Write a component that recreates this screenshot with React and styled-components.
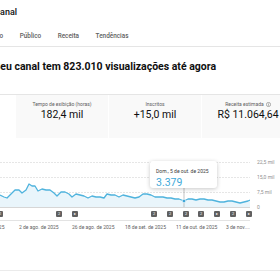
import React from "react";
import styled, { createGlobalStyle } from "styled-components";

const Global = createGlobalStyle`
  body {
    margin: 0;
    background: #fff;
  }
`;

const Page = styled.div`
  width: 280px;
  height: 280px;
  overflow: hidden;
  background: #fff;
  font-family: Roboto, "Liberation Sans", sans-serif;
  color: #0f0f0f;
`;

const Title = styled.h1`
  margin: 7px 0 0 -4.6px;
  font-size: 9px;
  line-height: 10px;
  font-weight: 500;
  white-space: nowrap;
`;

const Tabs = styled.nav`
  display: flex;
  align-items: center;
  gap: 16.5px;
  height: 20px;
  margin-top: 9px;
  margin-left: -24.5px;
  border-bottom: 1px solid #e5e5e5;
`;

const Tab = styled.span`
  font-size: 6.4px;
  font-weight: 500;
  color: #606060;
  white-space: nowrap;
`;

const Heading = styled.h2`
  margin: 14px 0 0 -6.2px;
  font-size: 10.5px;
  line-height: 12px;
  font-weight: 700;
  white-space: nowrap;
`;

const Cards = styled.div`
  display: flex;
  gap: 1px;
  width: 371px;
  margin-top: 21px;
  margin-left: -77px;
  border-top: 1px solid #e5e5e5;
`;

const Card = styled.div`
  width: 92px;
  height: 43px;
  flex-shrink: 0;
  display: flex;
  flex-direction: column;
  align-items: center;
  padding-top: 6px;
  box-sizing: border-box;
  background: ${(p) => (p.$active ? "#fff" : "#f9f9f9")};
`;

const CardLabel = styled.div`
  display: flex;
  align-items: center;
  gap: 2px;
  font-size: 5px;
  line-height: 6px;
  color: #606060;
  white-space: nowrap;
`;

const CardValue = styled.div`
  margin-top: 1.7px;
  font-size: 10.5px;
  line-height: 12px;
  white-space: nowrap;
`;

const ChartRow = styled.div`
  position: relative;
  display: flex;
  height: 70px;
`;

const Plot = styled.svg`
  display: block;
  flex-shrink: 0;
`;

const YAxis = styled.div`
  display: flex;
  flex-direction: column;
  gap: 7.3px;
  padding: 19.5px 0 0 7px;
`;

const YLabel = styled.span`
  font-size: 5px;
  line-height: 8px;
  color: #909090;
  white-space: nowrap;
`;

const Tooltip = styled.div`
  position: absolute;
  left: 150px;
  top: 23px;
  width: 67px;
  height: 27px;
  box-sizing: border-box;
  padding: 6.5px 0 0 6px;
  background: #fff;
  border-radius: 3px;
  box-shadow: 0 1px 4px rgba(0, 0, 0, 0.22);
`;

const TipDate = styled.div`
  font-size: 5px;
  line-height: 6px;
  color: #3a3a3a;
  white-space: nowrap;
`;

const TipValue = styled.div`
  margin-top: 3.3px;
  font-size: 10.5px;
  line-height: 12px;
  color: #41a9d9;
`;

const MarkerTrack = styled.div`
  position: relative;
  width: 250px;
  height: 12px;
  border-bottom: 1px solid #e3e3e3;
`;

const Marker = styled.span`
  position: absolute;
  top: 3px;
  width: 6px;
  height: 6px;
  border-radius: 1px;
  background: #606060;
  color: #fff;
  font-size: 4px;
  line-height: 6px;
  text-align: center;
`;

const XAxis = styled.div`
  position: relative;
  width: 250px;
  height: 14px;
`;

const XLabel = styled.span`
  position: absolute;
  top: 3px;
  font-size: 5px;
  line-height: 6px;
  color: #606060;
  white-space: nowrap;
`;

const Divider = styled.div`
  margin-top: 35px;
  height: 1px;
  background: #ebebeb;
`;

const cards = [
  { label: "Visualizações", value: "823,0 mil", active: true },
  { label: "Tempo de exibição (horas)", value: "182,4 mil" },
  { label: "Inscritos", value: "+15,0 mil" },
  { label: "Receita estimada", value: "R$ 11.064,64", info: true },
];

const points = [
  [0, 195], [4, 197], [7, 198], [11, 194], [15, 190], [19, 190], [22, 193],
  [26, 190], [29, 184], [32, 186], [35, 186], [38, 191], [42, 189], [46, 190],
  [50, 190], [54, 193], [57, 196], [61, 192], [65, 192], [69, 194], [72, 197],
  [76, 194], [80, 195], [84, 196], [88, 198], [92, 196], [96, 197], [100, 197],
  [104, 198], [107, 194], [111, 195], [115, 195], [119, 197], [123, 195],
  [127, 196], [131, 197], [135, 198], [139, 197], [143, 194], [147, 194],
  [151, 195], [155, 197], [159, 197], [163, 197], [167, 198], [171, 198],
  [175, 199], [179, 199], [184, 201], [188, 199], [192, 199], [196, 200],
  [200, 199], [204, 199], [208, 200], [212, 200], [216, 201], [220, 202],
  [224, 202], [228, 201], [232, 201], [236, 202], [240, 203], [244, 202],
  [248, 201], [250, 200],
];

const markers = [
  { x: -3, g: "2" }, { x: 56, g: "2" }, { x: 72, g: "▸" }, { x: 151, g: "2" },
  { x: 167, g: "2" }, { x: 183, g: "2" }, { x: 198, g: "2" }, { x: 214, g: "▸" },
  { x: 230, g: "2" }, { x: 246, g: "▸" },
];

const xLabels = [
  { x: -32, t: "9 de jul. de 2025" },
  { x: 19, t: "2 de ago. de 2025" },
  { x: 72, t: "26 de ago. de 2025" },
  { x: 125, t: "18 de set. de 2025" },
  { x: 176, t: "11 de out. de 2025" },
  { x: 226, t: "3 de nov...." },
];

const InfoIcon = () => (
  <svg width="5" height="5" viewBox="0 0 10 10">
    <circle cx="5" cy="5" r="4.2" fill="none" stroke="#606060" strokeWidth="1" />
    <rect x="4.5" y="4.2" width="1" height="3.2" fill="#606060" />
    <rect x="4.5" y="2.5" width="1" height="1" fill="#606060" />
  </svg>
);

const Chart = () => {
  const top = 138;
  const line = points.map(([x, y]) => `${x},${y - top}`).join(" ");
  const area = `0,69 ${line} 250,69`;
  return (
    <ChartRow>
      <Plot width="250" height="70" viewBox="0 0 250 70">
        {[24, 39, 54].map((y) => (
          <line key={y} x1="0" x2="250" y1={y + 0.5} y2={y + 0.5} stroke="#e6e6e6" strokeDasharray="2 1" />
        ))}
        <polygon points={area} fill="#e9f5fb" />
        <polyline points={line} fill="none" stroke="#4fb3dd" strokeWidth="1.3" strokeLinejoin="round" />
        <line x1="0" x2="250" y1="69.5" y2="69.5" stroke="#d6d6d6" />
        <line x1="184" x2="184" y1="50" y2="69" stroke="#9a9a9a" strokeWidth="0.6" />
        <circle cx="184" cy={201 - top} r="1.8" fill="#3ea6d8" stroke="#fff" strokeWidth="0.6" />
      </Plot>
      <YAxis>
        <YLabel>22,5 mil</YLabel>
        <YLabel>15,0 mil</YLabel>
        <YLabel>7,5 mil</YLabel>
        <YLabel>0</YLabel>
      </YAxis>
      <Tooltip>
        <TipDate>Dom., 5 de out. de 2025</TipDate>
        <TipValue>3.379</TipValue>
      </Tooltip>
    </ChartRow>
  );
};

export default function App() {
  return (
    <Page>
      <Global />
      <Title>canal</Title>
      <Tabs>
        <Tab>Conteúdo</Tab>
        <Tab>Público</Tab>
        <Tab>Receita</Tab>
        <Tab>Tendências</Tab>
      </Tabs>
      <Heading>Seu canal tem 823.010 visualizações até agora</Heading>
      <Cards>
        {cards.map((c) => (
          <Card key={c.label} $active={c.active}>
            <CardLabel>
              {c.label}
              {c.info && <InfoIcon />}
            </CardLabel>
            <CardValue>{c.value}</CardValue>
          </Card>
        ))}
      </Cards>
      <Chart />
      <MarkerTrack>
        {markers.map((m, i) => (
          <Marker key={i} style={{ left: m.x }}>{m.g}</Marker>
        ))}
      </MarkerTrack>
      <XAxis>
        {xLabels.map((l) => (
          <XLabel key={l.t} style={{ left: l.x }}>{l.t}</XLabel>
        ))}
      </XAxis>
      <Divider />
    </Page>
  );
}
